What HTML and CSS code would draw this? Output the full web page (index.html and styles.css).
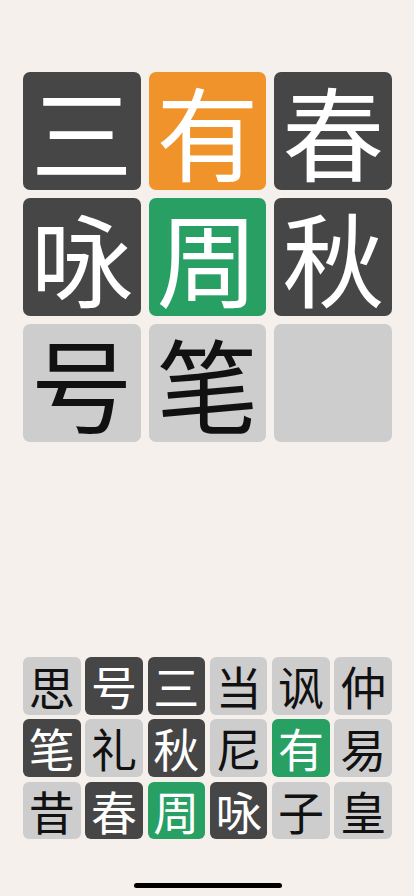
FILE: index.html
```html
<!DOCTYPE html>
<html lang="zh">
  <head>
    <meta charset="UTF-8" />
    <meta name="viewport" content="width=device-width, initial-scale=1.0" />
    <title>Document</title>
    <link rel="stylesheet" href="styles.css">
  </head>
  <body>
    <div class="game_wrap">
      <div class="board">
        <div class="tile dark">三</div>
        <div class="tile orange">有</div>
        <div class="tile dark">春</div>
        <div class="tile dark">咏</div>
        <div class="tile green">周</div>
        <div class="tile dark">秋</div>
        <div class="tile gray">号</div>
        <div class="tile gray">笔</div>
        <div class="tile gray"></div>
      </div>

      <div class="keyboard">
        <div class="key gray">思</div>
        <div class="key dark">号</div>
        <div class="key dark">三</div>
        <div class="key gray">当</div>
        <div class="key gray">讽</div>
        <div class="key gray">仲</div>
        <div class="key dark">笔</div>
        <div class="key gray">礼</div>
        <div class="key dark">秋</div>
        <div class="key gray">尼</div>
        <div class="key green">有</div>
        <div class="key gray">易</div>
        <div class="key gray">昔</div>
        <div class="key dark">春</div>
        <div class="key green">周</div>
        <div class="key dark">咏</div>
        <div class="key gray">子</div>
        <div class="key gray">皇</div>
      </div>

      <div class="home_bar"></div>
    </div>
  </body>
</html>
```

FILE: styles.css
```css
* {
  margin: 0;
  padding: 0;
  box-sizing: border-box;
}
body {
  background: #f5f0ec;
  font-family: "Noto Sans CJK SC", "Noto Sans", sans-serif;
}
.game_wrap {
  width: 414px;
  height: 896px;
  padding: 72px 22px 0 23px;
  display: flex;
  flex-direction: column;
}
.board {
  display: grid;
  grid-template-columns: repeat(3, 1fr);
  gap: 8px;
}
.tile {
  height: 118px;
  border-radius: 7px;
  display: flex;
  align-items: center;
  justify-content: center;
  padding-bottom: 2px;
  font-size: 102px;
  line-height: 1;
}
.keyboard {
  margin-top: 215px;
  display: grid;
  grid-template-columns: repeat(6, 1fr);
  gap: 4.7px;
}
.key {
  height: 57.7px;
  border-radius: 6px;
  display: flex;
  align-items: center;
  justify-content: center;
  padding-bottom: 2px;
  font-size: 46px;
  line-height: 1;
}
.dark {
  background: #464646;
  color: #fff;
}
.orange {
  background: #f0932b;
  color: #fff;
}
.green {
  background: #28a064;
  color: #fff;
}
.gray {
  background: #cdcdcd;
  color: #111;
}
.home_bar {
  margin: 44px auto 0;
  width: 148px;
  height: 5px;
  border-radius: 3px;
  background: #000;
}
```
